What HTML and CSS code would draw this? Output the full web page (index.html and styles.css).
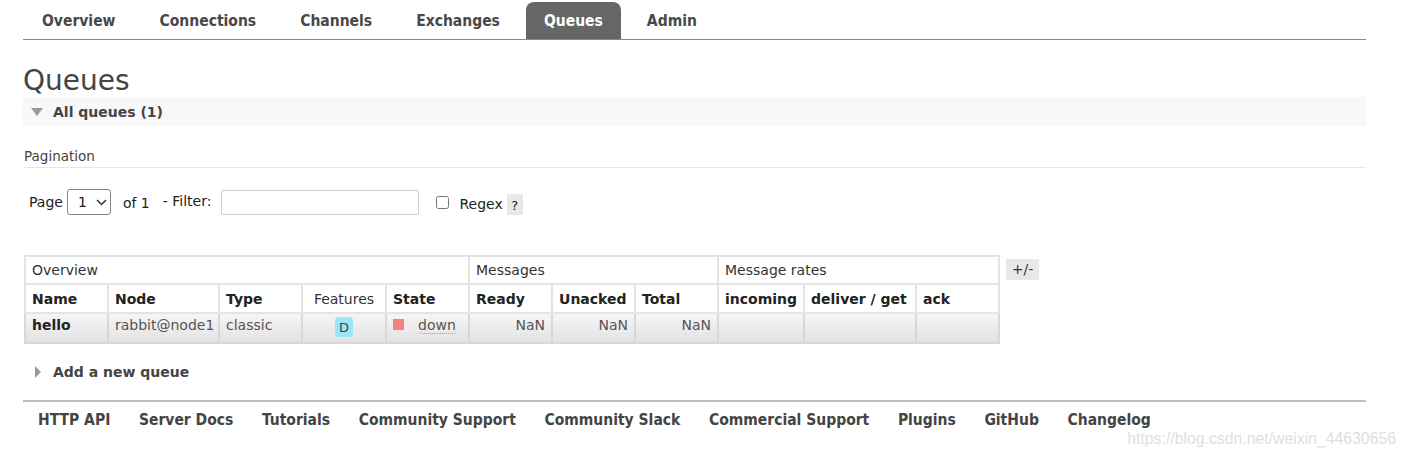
FILE: index.html
```html
<!DOCTYPE html>
<html>
<head>
<meta charset="utf-8">
<link rel="stylesheet" href="styles.css">
</head>
<body>
<div class="page">
  <ul class="nav">
    <li>Overview</li>
    <li>Connections</li>
    <li>Channels</li>
    <li>Exchanges</li>
    <li class="active">Queues</li>
    <li>Admin</li>
  </ul>

  <h1 class="title">Queues</h1>

  <div class="section-head">
    <span class="tri-down"></span>
    <span class="section-title">All queues (1)</span>
  </div>

  <h3 class="sub">Pagination</h3>

  <div class="pager">
    <span class="lbl">Page</span>
    <div class="select"><span>1</span>
      <svg width="11" height="7" viewBox="0 0 11 7"><path d="M1 1 L5.5 5.5 L10 1" fill="none" stroke="#333" stroke-width="1.5"/></svg>
    </div>
    <span class="lbl of">of 1</span>
    <span class="lbl filter">- Filter:</span>
    <input class="filter-input" type="text">
    <input class="check" type="checkbox">
    <span class="lbl regex">Regex</span>
    <span class="help">?</span>
  </div>

  <div class="table-wrap">
    <table class="list">
      <colgroup>
        <col style="width:83px"><col style="width:111px"><col style="width:83px"><col style="width:84px"><col style="width:83px">
        <col style="width:83px"><col style="width:83px"><col style="width:83px">
        <col style="width:86px"><col style="width:112px"><col style="width:83px">
      </colgroup>
      <thead>
        <tr class="group">
          <th colspan="5">Overview</th>
          <th colspan="3">Messages</th>
          <th colspan="3">Message rates</th>
        </tr>
        <tr class="cols">
          <th>Name</th>
          <th>Node</th>
          <th>Type</th>
          <th class="plain center">Features</th>
          <th>State</th>
          <th>Ready</th>
          <th>Unacked</th>
          <th>Total</th>
          <th>incoming</th>
          <th>deliver / get</th>
          <th>ack</th>
        </tr>
      </thead>
      <tbody>
        <tr class="row">
          <td class="name">hello</td>
          <td>rabbit@node1</td>
          <td>classic</td>
          <td class="center"><span class="badge">D</span></td>
          <td><span class="state-sq"></span><span class="down">down</span></td>
          <td class="num">NaN</td>
          <td class="num">NaN</td>
          <td class="num">NaN</td>
          <td></td>
          <td></td>
          <td></td>
        </tr>
      </tbody>
    </table>
    <span class="plusminus">+/-</span>
  </div>

  <div class="add">
    <span class="tri-right"></span>
    <span class="section-title">Add a new queue</span>
  </div>

  <ul class="footer">
    <li>HTTP API</li>
    <li>Server Docs</li>
    <li>Tutorials</li>
    <li>Community Support</li>
    <li>Community Slack</li>
    <li>Commercial Support</li>
    <li>Plugins</li>
    <li>GitHub</li>
    <li>Changelog</li>
  </ul>
</div>
<div class="watermark">https://blog.csdn.net/weixin_44630656</div>
</body>
</html>
```

FILE: styles.css
```css
html, body {
  margin: 0;
  padding: 0;
  background: #fff;
}
body {
  font-family: "DejaVu Sans", Verdana, sans-serif;
  color: #444;
  width: 1406px;
  height: 458px;
  overflow: hidden;
  position: relative;
}
.page {
  margin-left: 23px;
  width: 1343px;
}
.nav {
  list-style: none;
  margin: 0;
  padding: 0 0 0 1px;
  display: flex;
  height: 39px;
  border-bottom: 1px solid #8a8a8a;
}
.nav li {
  margin-top: 2px;
  padding: 0 18px;
  margin-right: 8px;
  height: 37px;
  line-height: 39px;
  font-family: "DejaVu Sans Condensed", "DejaVu Sans", sans-serif;
  font-weight: bold;
  font-size: 15.5px;
  color: #484848;
  border-radius: 8px 8px 0 0;
}
.nav li.active {
  background: #666;
  color: #fff;
}
.title {
  margin: 24px 0 0;
  font-size: 28px;
  line-height: 33px;
  font-weight: normal;
  color: #444;
}
.section-head {
  background: #f8f8f8;
  height: 29px;
  display: flex;
  align-items: center;
}
.tri-down {
  width: 0;
  height: 0;
  margin-left: 8px;
  border-left: 6px solid transparent;
  border-right: 6px solid transparent;
  border-top: 8px solid #999;
  margin-right: 10px;
}
.section-title {
  font-weight: bold;
  font-size: 14px;
  color: #444;
}
.sub {
  margin: 21px 0 0;
  font-weight: normal;
  font-size: 13.5px;
  line-height: 18px;
  padding: 0 0 2px 1px;
  border-bottom: 1px solid #e6e6e6;
  color: #444;
}
.pager {
  margin-top: 21px;
  height: 26px;
  display: flex;
  align-items: center;
  padding-left: 6px;
  font-size: 14px;
  color: #222;
}
.lbl {
  font-size: 14px;
  color: #222;
}
.select {
  margin-left: 4px;
  width: 44px;
  height: 26px;
  box-sizing: border-box;
  border: 1px solid #858585;
  border-radius: 3px;
  display: flex;
  align-items: center;
  padding-left: 10px;
  gap: 9px;
  font-size: 14px;
}
.of {
  margin-left: 12px;
  margin-top: 2px;
}
.filter {
  margin-left: 13px;
  margin-top: -3px;
}
.filter-input {
  margin: 0 0 0 10px;
  width: 198px;
  height: 25px;
  box-sizing: border-box;
  border: 1px solid #cfcfcf;
  border-radius: 2px;
  padding: 0;
}
.check {
  margin: 0 0 0 17px;
  width: 13px;
  height: 13px;
}
.regex {
  margin-left: 10px;
  margin-top: 4px;
}
.help {
  margin-left: 4px;
  width: 16px;
  height: 21px;
  background: #e8e8e8;
  font-size: 13px;
  line-height: 23px;
  text-align: center;
  margin-top: 5px;
  color: #222;
}
.table-wrap {
  margin-top: 40px;
  margin-left: 1px;
  display: flex;
  align-items: flex-start;
}
.list {
  border-collapse: collapse;
  table-layout: fixed;
  width: 974px;
  border: 2px solid #d6d6d6;
  font-size: 14px;
}
.list th, .list td {
  padding: 0 0 0 6px;
  border: 2px solid #e4e4e4;
  text-align: left;
  white-space: nowrap;
  overflow: hidden;
}
.list .group th {
  height: 26px;
  font-weight: normal;
  color: #333;
}
.list .cols th {
  height: 26px;
  padding-top: 1px;
  font-weight: bold;
  color: #222;
}
.list .cols th.plain {
  font-weight: normal;
  color: #333;
}
.list th.center, .list td.center {
  text-align: center;
  padding: 0;
}
.list .row td {
  height: 22px;
  padding-bottom: 6px;
  background: linear-gradient(#f5f5f5, #e3e3e3);
  border-color: #d8d8d8;
  color: #555;
}
.list td.name {
  font-weight: bold;
  color: #222;
}
.list .row td.num {
  text-align: right;
  padding-right: 6px;
}
.list .row td.center {
  padding-top: 1px;
  padding-bottom: 3px;
}
.badge {
  display: inline-block;
  width: 18px;
  height: 20px;
  line-height: 21px;
  border-radius: 4px;
  background: #99e6fa;
  color: #444;
  font-size: 13px;
  text-align: center;
  vertical-align: middle;
}
.state-sq {
  display: inline-block;
  width: 11px;
  height: 11px;
  background: #f78080;
  vertical-align: 0px;
  margin-right: 14px;
}
.down {
  border-bottom: 1px dotted #999;
  border-radius: 3px;
  color: #555;
}
.plusminus {
  margin-left: 6px;
  margin-top: 4px;
  width: 33px;
  height: 21px;
  background: #e8e8e8;
  font-size: 14px;
  line-height: 21px;
  text-align: center;
  color: #333;
}
.add {
  margin-top: 13px;
  height: 29px;
  display: flex;
  align-items: center;
}
.tri-right {
  width: 0;
  height: 0;
  margin-left: 12px;
  border-top: 6px solid transparent;
  border-bottom: 6px solid transparent;
  border-left: 6px solid #999;
  margin-right: 12px;
}
.footer {
  list-style: none;
  margin: 14px 0 0;
  padding: 0 0 0 15px;
  border-top: 2px solid #bdbdbd;
  display: flex;
  gap: 28.6px;
  height: 36px;
  align-items: center;
}
.footer li {
  font-family: "DejaVu Sans Condensed", "DejaVu Sans", sans-serif;
  font-weight: bold;
  font-size: 15.5px;
  color: #444;
}
.watermark {
  position: absolute;
  right: 10px;
  top: 430px;
  font-family: "Liberation Sans", Arial, sans-serif;
  font-size: 15.8px;
  color: #e0e0e0;
}
```
